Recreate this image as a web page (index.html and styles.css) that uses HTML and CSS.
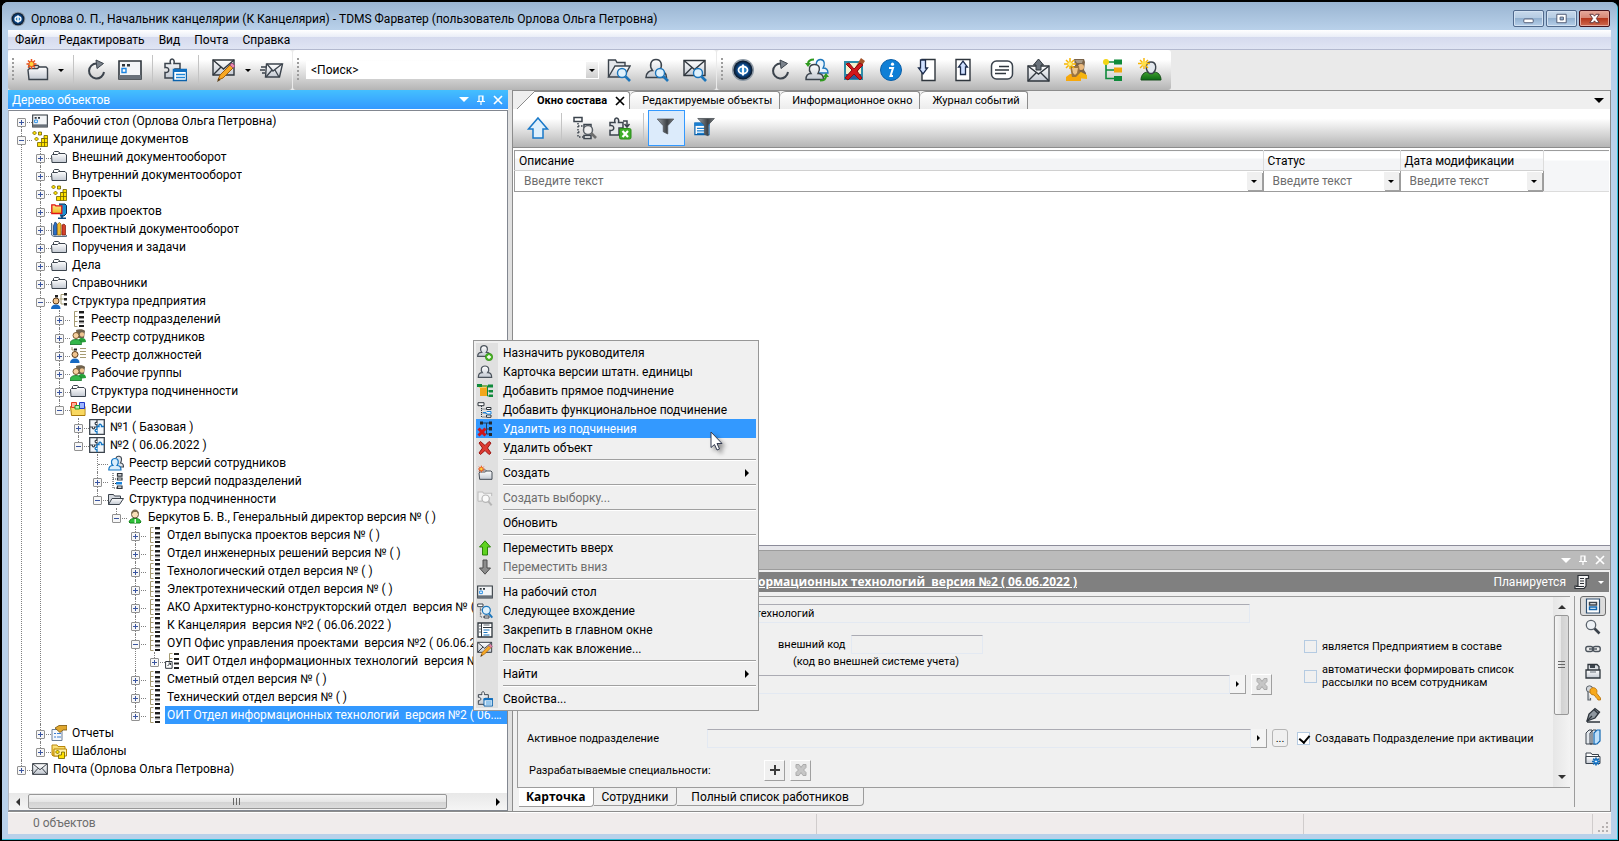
FILE: index.html
```html
<!DOCTYPE html>
<html lang="ru">

<head>
    <meta charset="UTF-8">
    <meta name="viewport" content="width=device-width, initial-scale=1.0">
    <title>TDMS Фарватер</title>
    <link rel="stylesheet" href="styles.css">
</head>

<body>
    <!-- icon set -->
    <svg class="sprite" aria-hidden="true">
        <defs>
            <linearGradient id="g-grey" x1="0" y1="0" x2="0" y2="1">
                <stop offset="0" stop-color="#fff" />
                <stop offset="1" stop-color="#c3c9d2" />
            </linearGradient>
            <linearGradient id="g-green" x1="0" y1="0" x2="0" y2="1">
                <stop offset="0" stop-color="#3fa02e" />
                <stop offset="1" stop-color="#0c6a14" />
            </linearGradient>
            <linearGradient id="g-yellow" x1="0" y1="0" x2="0" y2="1">
                <stop offset="0" stop-color="#ffe98a" />
                <stop offset="1" stop-color="#e9b51c" />
            </linearGradient>
            <radialGradient id="g-logo">
                <stop offset="0" stop-color="#4fb4f0" />
                <stop offset=".55" stop-color="#0d4f96" />
                <stop offset="1" stop-color="#0a1422" />
            </radialGradient>
            <linearGradient id="g-funnel" x1="0" y1="0" x2="1" y2="0">
                <stop offset="0" stop-color="#9aa0a6" />
                <stop offset=".6" stop-color="#3c4044" />
                <stop offset="1" stop-color="#7b8085" />
            </linearGradient>
        </defs>

        <symbol id="i-logo" viewBox="0 0 24 24">
            <circle cx="12" cy="12" r="11" fill="#8d99a5" />
            <circle cx="12" cy="12" r="9.5" fill="url(#g-logo)" />
            <ellipse cx="12" cy="12" rx="4.5" ry="3.5" fill="none" stroke="#fff" stroke-width="1.8" />
            <path d="M12 6.5v11" stroke="#fff" stroke-width="2" />
        </symbol>
        <symbol id="i-folder" viewBox="0 0 16 16">
            <path d="M2.500 6V3.500l1-1h4l1.500 2h4.500l1 1V6" fill="#fff" stroke="#3b434c" />
            <path d="M.5 6.500l1-1h5l1-1h6.500l1.500 1.500v7.500H1z" fill="url(#g-grey)" stroke="#3b434c" />
        </symbol>
        <symbol id="i-openfolder" viewBox="0 0 16 16">
            <path d="M.5 13.500v-10h5l1 1.500h6v3" fill="#d5d9df" stroke="#3b434c" />
            <path d="M.5 13.500l3.500-6h11.500l-4 6z" fill="url(#g-grey)" stroke="#3b434c" />
        </symbol>
        <symbol id="i-new" viewBox="0 0 24 24">
            <path d="M4 10V7.500h9l2 2.500h6" fill="#fff" stroke="#3b434c" stroke-width="1.400" />
            <path d="M3 12l1.500-1.500h8l1.500-1.500h7l1.500 1.500V21.500H4z" fill="url(#g-grey)" stroke="#3b434c" stroke-width="1.400" />
            <path d="M6.500 1v10M1.500 6h10M3 2.500l7 7M10 2.500l-7 7" stroke="#e8501c" stroke-width="1.500" />
            <circle cx="6.500" cy="6" r="2.600" fill="#ffd23a" stroke="#e8501c" />
        </symbol>
        <symbol id="i-refresh" viewBox="0 0 24 24">
            <path d="M12.500 5.500a7.500 7.500 0 1 0 7.500 8.500" fill="none" stroke="#3b434c" stroke-width="2" />
            <path d="M12 2l7.500 3.500-6.500 5z" fill="#7b838c" stroke="#3b434c" />
        </symbol>
        <symbol id="i-desktop" viewBox="0 0 24 20">
            <path d="M1 1h22v18H1z" fill="#f3f5f7" stroke="#2f363d" stroke-width="1.600" />
            <path d="M1 15h22v4H1z" fill="#69717a" />
            <path d="M4 4h3v2.500H4zM9 4h3v2.500H9z" fill="#2f363d" />
            <path d="M4 8.500h4v4H4z" fill="#fff" stroke="#1a84e0" stroke-width="1.400" />
        </symbol>
        <symbol id="i-props" viewBox="0 0 24 24">
            <path d="M2 18.500v-4c5 1 5-6 0-5V5.500h5.500c-2-6 5-6 3.500 0H17V11h-5v9H2z" fill="url(#g-grey)" stroke="#3b434c" stroke-width="1.500" />
            <path d="M10.500 11.500h13v11h-13z" fill="#fff" stroke="#0a62ac" stroke-width="1.500" />
            <path d="M10 11h14v3H10z" fill="#0f6fc0" />
            <path d="M13 16.500h9M13 19.500h9" stroke="#1d86d8" stroke-width="1.400" />
        </symbol>
        <symbol id="i-mail" viewBox="0 0 24 18">
            <path d="M1 1h22v16H1z" fill="url(#g-grey)" stroke="#2f363d" stroke-width="1.500" />
            <path d="M1 1l11 9L23 1M1 17l8-9M23 17l-8-9" fill="none" stroke="#2f363d" stroke-width="1.400" />
        </symbol>
        <symbol id="i-compose" viewBox="0 0 24 24">
            <path d="M1 2h21v15H1z" fill="url(#g-grey)" stroke="#2f363d" stroke-width="1.400" />
            <path d="M1 2l10.500 9L22 2M1 17l8-8" fill="none" stroke="#2f363d" stroke-width="1.400" />
            <path d="M6 22l2-5L18 7l3 3-10 10z" fill="#f7a823" stroke="#a35f0b" />
            <path d="M18 7l2-2 3 3-2 2z" fill="#e58bb0" stroke="#a8507a" />
            <path d="M5 24l1.500-4 2 2z" fill="#5b3c12" />
        </symbol>
        <symbol id="i-send" viewBox="0 0 24 24">
            <path d="M6.500 6h16l-3 13h-14z" fill="url(#g-grey)" stroke="#3b434c" stroke-width="1.400" />
            <path d="M7 6l6 7 9-7M6 19l6-7M19 19l-4-7" fill="none" stroke="#3b434c" stroke-width="1.300" />
            <path d="M1 9h5M0 12h5M2 15h3" stroke="#3b434c" stroke-width="1.300" />
        </symbol>
        <symbol id="i-findfolder" viewBox="0 0 24 24">
            <path d="M1.500 19V2h7l1.500 2.500h8V8" fill="#e4e7eb" stroke="#3b434c" stroke-width="1.400" />
            <path d="M1.500 19L8 8h15l-6 11z" fill="url(#g-grey)" stroke="#3b434c" stroke-width="1.400" />
            <circle cx="15" cy="15" r="4.500" fill="#dff1fc" stroke="#1b75bb" stroke-width="1.400" />
            <path d="M18.500 18.500L23 23" stroke="#1b75bb" stroke-width="2.600" />
        </symbol>
        <symbol id="i-finduser" viewBox="0 0 24 24">
            <path d="M1 19.500c0-5 4-7 6.500-7C4 8 5.500 1.500 11 1.500S18 8 14.500 12.500c3 0 7 2 7 7z" fill="url(#g-grey)" stroke="#3b434c" stroke-width="1.500" />
            <circle cx="15" cy="15" r="4.500" fill="#dff1fc" stroke="#1b75bb" stroke-width="1.400" />
            <path d="M18.500 18.500L23 23" stroke="#1b75bb" stroke-width="2.600" />
        </symbol>
        <symbol id="i-findmail" viewBox="0 0 24 24">
            <path d="M1 2.500h21v15H1z" fill="url(#g-grey)" stroke="#2f363d" stroke-width="1.400" />
            <path d="M1 2.500l10.500 9 10.500-9M1 17.500l8-8" fill="none" stroke="#2f363d" stroke-width="1.400" />
            <circle cx="15" cy="15" r="4.500" fill="#dff1fc" stroke="#1b75bb" stroke-width="1.400" />
            <path d="M18.500 18.500L23 23" stroke="#1b75bb" stroke-width="2.600" />
        </symbol>
        <symbol id="i-user" viewBox="0 0 24 24">
            <path d="M2 20c0-5 3-7 6-7C5 9 6 3 12 3s7 6 4 10c3 0 6 2 6 7z" fill="url(#g-grey)" stroke="#4b535c" stroke-width="1.800" />
        </symbol>
        <symbol id="i-useradd" viewBox="0 0 24 24">
            <path d="M1 17c0-4 3-6 6-6C4 7 5 1 10.500 1S17 7 14 11c3 0 6 2 6 6z" fill="url(#g-grey)" stroke="#4b535c" stroke-width="1.800" />
            <circle cx="18" cy="18" r="5.500" fill="#4cb528" stroke="#2d8a12" />
            <path d="M18 15v6M15 18h6" stroke="#fff" stroke-width="2" />
        </symbol>
        <symbol id="i-swapusers" viewBox="0 0 24 24">
            <path d="M9 15c0-4 2-5 4-5-3-3-2-8.500 2.500-8.500S20 7 18 10c2 0 5 1 5 5z" fill="#eaf5fd" stroke="#1b75bb" stroke-width="1.300" />
            <path d="M1 21.500c0-4 2-6 5-6-3-4-2-9 3.500-9s6 5 3.500 9c3 0 5.500 2 5.500 6z" fill="url(#g-grey)" stroke="#3b434c" stroke-width="1.400" />
            <path d="M9 1.500C5 1.500 3 3 3 6M15 22.500c4 0 6-2 6-4.500" fill="none" stroke="#2f9a1e" stroke-width="2" />
            <path d="M0 5h6L3 9zM18 19h6l-3-4z" fill="#2f9a1e" />
        </symbol>
        <symbol id="i-cross-note" viewBox="0 0 24 24">
            <path d="M2 3h19v19H2z" fill="#2c8ca8" />
            <path d="M4 5h15v13H4z" fill="#f4f1cf" />
            <path d="M4 16h15v5H4z" fill="#2a5a9a" />
            <path d="M19 0l4 3-9 13-4 2 1-5z" fill="#a5542a" />
            <path d="M4 6l3-1 5 6 6-6 3 2-6 6 5 7-2 2-6-6-6 6-3-2 7-8z" fill="#d1171b" stroke="#8a0d10" />
        </symbol>
        <symbol id="i-info" viewBox="0 0 24 24">
            <circle cx="12" cy="12" r="10.500" fill="#0f7fd6" stroke="#0b5fa8" />
            <path d="M10 10h4l-2.500 8h2.500" fill="none" stroke="#fff" stroke-width="2" />
            <circle cx="13.500" cy="6.200" r="1.600" fill="#fff" />
        </symbol>
        <symbol id="i-doc-down" viewBox="0 0 24 24">
            <path d="M6 1.500h13v21H6z" fill="#fff" stroke="#2f363d" stroke-width="1.400" />
            <path d="M4.500 2h5V10h2L7 16 2.500 10h2z" fill="#cfe0ff" stroke="#1c2c4c" stroke-width="1.300" />
        </symbol>
        <symbol id="i-doc-up" viewBox="0 0 24 24">
            <path d="M3 1.500h14v21H3z" fill="#fff" stroke="#2f363d" stroke-width="1.400" />
            <path d="M7.500 16.500V9h-2L10 3l4.500 6h-2v7.500z" fill="#cfe0ff" stroke="#1c2c4c" stroke-width="1.300" />
        </symbol>
        <symbol id="i-note" viewBox="0 0 24 24">
            <rect x="1.500" y="3" width="21" height="18" rx="5" fill="#fff" stroke="#3b434c" stroke-width="1.500" />
            <path d="M9 8.500h10M5 12h14M5 15.500h11" stroke="#2f363d" stroke-width="1.500" />
        </symbol>
        <symbol id="i-outbox" viewBox="0 0 24 24">
            <path d="M1 8h21v15H1z" fill="url(#g-grey)" stroke="#2f363d" stroke-width="1.400" />
            <path d="M1 8l10.500 8L22 8M1 23l8-8M22 23l-8-8" fill="none" stroke="#2f363d" stroke-width="1.400" />
            <path d="M9 12V7H6.500l5-6 5 6H14v5z" fill="#6a727b" stroke="#2f363d" />
        </symbol>
        <symbol id="i-newgroup" viewBox="0 0 24 24">
            <path d="M10 1h10l1 3-1 8 2 3v5h-9z" fill="#7a6348" />
            <path d="M11 2h8l-1 3h-5z" fill="#a79a86" />
            <circle cx="17" cy="9" r="3" fill="#e9b97e" />
            <path d="M13 20v-4l4-2 6 3v4z" fill="#f5b50f" />
            <path d="M2 23v-4l4-3h7l4 3v4z" fill="#f7a80c" />
            <path d="M6 8h9l1 7-4 4H8z" fill="#9a7440" />
            <path d="M8 10h6l-1 5-2 2-2-2z" fill="#ecc48a" />
            <path d="M6 0v11M0 6h12M2 2l8 8M10 2l-8 8" stroke="#f7b500" stroke-width="1.500" />
            <circle cx="6" cy="6" r="2" fill="#fff27a" />
        </symbol>
        <symbol id="i-hierarchy" viewBox="0 0 24 24">
            <path d="M5 6v14.500h8M5 12h8M5 4h8" fill="none" stroke="#0f8a3a" stroke-width="1.600" />
            <circle cx="5" cy="4" r="3" fill="#f2d512" />
            <path d="M13 1.500h8v5h-8zM13 18h8v5h-8z" fill="#0f8a3a" />
            <path d="M13 9.500h8v5h-8z" fill="#f0a90c" />
        </symbol>
        <symbol id="i-newuser" viewBox="0 0 24 24">
            <path d="M3 22c0-5 3-8 7-8h6c4 0 7 3 7 8z" fill="url(#g-green)" stroke="#174d1a" />
            <path d="M13 4c6 0 6 8 1.500 11.500h-3C7 12 7 4 13 4z" fill="#e3e8ee" stroke="#3b434c" stroke-width="1.400" />
            <path d="M6 0v11M0 5.500h12M2 2l8 8M10 2l-8 8" stroke="#f7b500" stroke-width="1.400" />
            <circle cx="6" cy="5.500" r="2.500" fill="#ffe04a" />
        </symbol>

        <symbol id="i-up" viewBox="0 0 24 24">
            <path d="M12 2L21.500 13H17v9H7v-9H2.500z" fill="#dff0fc" stroke="#1878c8" stroke-width="1.500" />
        </symbol>
        <symbol id="i-treefind" viewBox="0 0 24 24">
            <path d="M1 1.500h8v4H1z" fill="#fff" stroke="#3b434c" stroke-width="1.500" />
            <path d="M5 7v14h6M5 10h6M5 16h3" fill="none" stroke="#3b434c" stroke-width="1.400" stroke-dasharray="1.500 1.500" />
            <path d="M11 8.500h7v3h-7zM11 19.500h7v3h-7z" fill="#fff" stroke="#3b434c" stroke-width="1.500" />
            <circle cx="15" cy="14" r="4.500" fill="#eee" stroke="#5b6168" stroke-width="1.500" />
            <path d="M18 17l5 5" stroke="#6d6d6d" stroke-width="2.600" />
        </symbol>
        <symbol id="i-treefind-blue" viewBox="0 0 24 24">
            <path d="M1 1.500h8v4H1z" fill="#fff" stroke="#3b434c" stroke-width="1.500" />
            <path d="M5 7v14h6M5 10h6M5 16h3" fill="none" stroke="#3b434c" stroke-width="1.400" stroke-dasharray="1.500 1.500" />
            <path d="M11 19.500h7v3h-7z" fill="#fff" stroke="#3b434c" stroke-width="1.500" />
            <circle cx="14" cy="11" r="6" fill="#dff1fc" stroke="#1b75bb" stroke-width="1.800" />
            <path d="M18 16l5 6" stroke="#1b75bb" stroke-width="3" />
        </symbol>
        <symbol id="i-excel" viewBox="0 0 24 24">
            <path d="M2 18.500v-4c5 1 5-6 0-5V6.500h5c-2-6 5-6 3.500 0H15V12h-4v7H2z" fill="#e6e8eb" stroke="#3b434c" stroke-width="1.500" />
            <path d="M15 5h4v5M16.500 8l2.500 3 2.500-3" fill="none" stroke="#3b434c" stroke-width="1.500" />
            <rect x="11.500" y="12.500" width="11.500" height="10.500" rx="1.500" fill="#3fae2a" stroke="#2a8a18" />
            <path d="M14.500 15l5.500 6M20 15l-5.500 6" stroke="#fff" stroke-width="2.200" />
        </symbol>
        <symbol id="i-funnel" viewBox="-2 -1 32 32">
            <path d="M1 3h22l-8 9v11l-6-3V12z" fill="url(#g-funnel)" stroke="#4d5257" />
        </symbol>
        <symbol id="i-funnellist" viewBox="-2 -1 29 29">
            <path d="M1.500 7.500h17v14h-17z" fill="#fff" stroke="#0a62ac" stroke-width="1.500" />
            <path d="M1 7h18v4H1z" fill="#1b7fd0" />
            <path d="M4 14h12M4 17h12M4 20h9" stroke="#1b7fd0" stroke-width="1.400" />
            <path d="M5 2h20l-7.500 8v13L13 21V10z" fill="url(#g-funnel)" stroke="#4d5257" />
        </symbol>

        <symbol id="i-cubes" viewBox="0 0 16 16">
            <path d="M2.500 0l2 2-2 2-2-2zM4.500 6l2 2-2 2-2-2z" fill="#ffe100" stroke="#6e6000" stroke-width=".8" />
            <path d="M6.500 1h3v3h-3z" fill="#ffe100" stroke="#6e6000" stroke-width=".8" />
            <path d="M5.500 11.500h4v-4h2.500v-3h3.500v11h-10zM9.500 7.500h6M9.500 11.500h6M9.500 11.500v4M12.500 7.500v8" fill="#ffe100" stroke="#6e6000" stroke-width=".8" />
        </symbol>
        <symbol id="i-archive" viewBox="0 0 16 16">
            <path d="M8 1h6l1.500 1.500v8L13 13H9" fill="#1d8fd0" stroke="#0a2c50" />
            <path d="M7 15.500h8M11 12v3" stroke="#0a4a80" stroke-width="1.800" />
            <path d="M.8 10.500V1.800h3l1 1h6v7.700z" fill="url(#g-yellow)" stroke="#e01515" stroke-width="1.300" />
        </symbol>
        <symbol id="i-books" viewBox="0 0 16 16">
            <path d="M.5 2v12l2 1.500h13V14" fill="#cfd6dd" stroke="#5a7288" />
            <path d="M2.500 5l1.500-4 1.500 1v12h-3z" fill="#2b6fc4" stroke="#123a70" stroke-width=".7" />
            <path d="M6.500 3l2-1.500L10 3v11H6.500z" fill="#f3bd2d" stroke="#8a6208" stroke-width=".7" />
            <path d="M11 4l2-1 1.500 1.500V14H11z" fill="#d5402a" stroke="#7c1a0c" stroke-width=".7" />
        </symbol>
        <symbol id="i-struct" viewBox="0 0 16 16">
            <path d="M13 1.500h-3v9.500h3M8.500 6H13" fill="none" stroke="#a59b72" />
            <path d="M13 0h3v2.500h-3zM13 5h3v2.500h-3zM13 10h3v2.500h-3zM4 2h3v2.500H4z" fill="#222" />
            <circle cx="5" cy="8" r="3" fill="#f1c48f" stroke="#5a3a18" />
            <path d="M0 16c0-3 2-4.500 5-4.500s4.500 1.500 4.500 4.500z" fill="#1769c2" />
        </symbol>
        <symbol id="i-registry" viewBox="0 0 16 16">
            <path d="M7.500 .5h-3v15h3M4.500 5.500h3M4.500 10.500h3" fill="none" stroke="#a59b72" />
            <path d="M9 0h5v2H9zM9 5h5v2H9zM9 9.500h5v2H9zM9 14h5v2H9z" fill="#1c1c1c" />
            <path d="M9 2h5v1H9zM9 7h5v1H9zM9 11.500h5v1H9z" fill="#9b9b9b" />
        </symbol>
        <symbol id="i-people" viewBox="0 0 16 16">
            <path d="M6 1c3-1.500 8-1 9 1l-1 7H7z" fill="#70624d" />
            <circle cx="12" cy="5.500" r="2.200" fill="#efc491" />
            <path d="M8 14c0-3 1-5 4-5s4 2 4 4z" fill="#25a038" />
            <circle cx="6" cy="6.500" r="3" fill="#f6d0a0" stroke="#7b5a30" />
            <path d="M0 15.500c0-3.500 2-5 6-5s5.500 1.500 5.500 5z" fill="#34b84a" stroke="#137024" stroke-width=".8" />
        </symbol>
        <symbol id="i-positions" viewBox="0 0 16 16">
            <path d="M10 1.500h6M10 4.500h6M10 7.500h6M10 10.500h6M2 0v3h3" fill="none" stroke="#a59b72" />
            <path d="M4 1.500h3v2H4z" fill="#222" />
            <circle cx="5" cy="7.500" r="3" fill="#f1c48f" stroke="#5a3a18" />
            <path d="M0 16c0-3 2-4.500 5-4.500s4.500 1.500 4.500 4.500z" fill="#1769c2" />
        </symbol>
        <symbol id="i-versions" viewBox="0 0 16 16">
            <path d="M.5 5.500h14.500v9H1.500z" fill="url(#g-yellow)" stroke="#a8780a" />
            <path d="M1.500 1.500h5v5h-5z" fill="#ffb09a" stroke="#e03a1a" />
            <path d="M9.500 1.500h5v6h-5z" fill="#9cb4ff" stroke="#2038c8" />
            <path d="M5 4.500h4.500V8H5z" fill="#b8f0b0" stroke="#1c9a2c" />
            <path d="M2 9h12.500v5H2z" fill="#f9d860" />
        </symbol>
        <symbol id="i-puzzle" viewBox="0 0 16 16">
            <path d="M.7 .7h14.600v14.600H.7z" fill="#f2f6fa" stroke="#3b434c" stroke-width="1.300" />
            <path d="M1 8h2.500c-1 2.500 3 2.500 2 0H8V5.500c-2.500 1-2.500-3 0-2V1" fill="none" stroke="#3b434c" stroke-width="1.200" />
            <path d="M8 15v-2.500c-2.500 1-2.500-3 0-2V7.500h2c-1-3 3-3 2.500 0H15" fill="none" stroke="#1577c4" stroke-width="1.300" />
        </symbol>
        <symbol id="i-verusers" viewBox="0 0 16 16">
            <path d="M8 3c1-3 6-2 5.500 1.500C13.500 6 13 7 12.500 8c2 0 3 1.500 3 4h-4" fill="#dfe3e8" stroke="#3b434c" stroke-width="1.100" />
            <path d="M.8 15c0-3.500 2-4.500 4-4.500C2.500 8 3 3.500 7 3.500S11 8 9 10.500c2 0 4 1 4 4.500z" fill="#d9edfb" stroke="#1577c4" stroke-width="1.200" />
        </symbol>
        <symbol id="i-vertree" viewBox="0 0 16 16">
            <path d="M5 0v15h4M5 6h4M5 10.500h4" fill="none" stroke="#2f363d" stroke-dasharray="1 1" />
            <path d="M9.500 .7h4.500v2.500H9.500zM9.500 5h4.500v2H9.500zM9.500 13h4.500v2.300H9.500z" fill="#fff" stroke="#2f363d" stroke-width="1.200" />
            <path d="M8 9h6v2.500H8z" fill="#1b84dc" />
        </symbol>
        <symbol id="i-person" viewBox="0 0 16 16">
            <path d="M2 13c1-3 3-3.500 6-3.500s5 .5 6 3.500l-1 1H3z" fill="#2fc13a" stroke="#108018" />
            <circle cx="8" cy="5.500" r="3.500" fill="#f8dfb8" stroke="#6a5a44" />
            <path d="M4 5c0-6 8-6 8 0L10 3H7z" fill="#7b6a50" />
            <path d="M7.500 10h1.500v4H7.500z" fill="#e6f7e6" />
        </symbol>
        <symbol id="i-shortcut" viewBox="0 0 16 16">
            <path d="M7.500 .5h-3v9M4.500 5.500h3" fill="none" stroke="#a59b72" />
            <path d="M9 0h5v2H9zM9 5h5v2H9zM9 9.500h5v2H9zM9 14h5v2H9z" fill="#1c1c1c" />
            <path d="M.6 8.500h6.500v6.800H.6z" fill="#fff" stroke="#2f363d" />
            <path d="M2.500 13l3-3M3.500 10h2v2" fill="none" stroke="#2f363d" />
        </symbol>
        <symbol id="i-reports" viewBox="0 0 16 16">
            <path d="M1 4.500h10v11H1z" fill="#f5f8fc" stroke="#6d7f96" />
            <path d="M3 8.500h2M3 12h2M6 8.500h4M6 12h4" stroke="#3f7fd0" />
            <path d="M4 3l4-2.500h8V5h-4l-3 2.500z" fill="#e0a72e" stroke="#7a5408" stroke-width=".8" />
        </symbol>
        <symbol id="i-templates" viewBox="0 0 16 16">
            <path d="M1 12V2h5l1 1.500h7V13H2z" fill="url(#g-yellow)" stroke="#b8860b" />
            <path d="M3 6h12.500v7H3z" fill="#fff0a8" stroke="#b8860b" />
            <path d="M6.500 7l2 2-2 2-2-2zM7.500 12h3V9h3v6.500h-6z" fill="#ffe100" stroke="#6e6000" stroke-width=".8" />
        </symbol>

        <symbol id="i-addboss" viewBox="0 0 16 16">
            <path d="M3 4h7v9H3z" fill="#f2a71b" />
            <path d="M1 2h9l-1 3H2z" fill="#f7cf6a" />
            <path d="M0 1h5v3H0zM11 1.500h5v3h-5zM12 7h4v2.500h-4zM12 11.500h4V14h-4z" fill="#0f8a3a" />
            <path d="M10.500 3v10H12M5 3h6M10.500 8H12" fill="none" stroke="#0f8a3a" />
        </symbol>
        <symbol id="i-addfunc" viewBox="0 0 16 16">
            <path d="M1 .7h6v3H1z" fill="#fff" stroke="#2f363d" />
            <path d="M4.500 4v11H9M4.500 7H9M4.500 11H9" fill="none" stroke="#2f363d" stroke-dasharray="1 1" />
            <path d="M9.500 5.500h4.500v2H9.500zM9.500 13h4.500v2.300H9.500z" fill="#fff" stroke="#2f363d" />
            <path d="M6 10.500h3l1-1h4v2.500h-4l-1-1z" fill="#fff" stroke="#1b84dc" />
        </symbol>
        <symbol id="i-unlink" viewBox="0 0 16 16">
            <path d="M4 2h10M9.500 2v11H12M9.500 8H12" fill="none" stroke="#1d3d60" />
            <path d="M3 .5h3v3H3zM12 .5h3v3h-3zM12 6h3v3.500h-3zM12 12h3v3h-3z" fill="#26282b" />
            <path d="M1.500 7.500l7 7M8.500 7.500l-7 7" stroke="#cf1418" stroke-width="3" />
        </symbol>
        <symbol id="i-delete" viewBox="0 0 16 16">
            <path d="M2 3l1.500-1.500L8 5.500l4-4L14 3l-3.500 5 3.500 5-2 1.500-4-4-4.500 4L2 13l3.500-5z" fill="#dd3a32" stroke="#9e1410" />
        </symbol>
        <symbol id="i-select" viewBox="0 0 24 24">
            <path d="M1.500 17V3h7l1.500 2h12v4M1.500 17H8" fill="#f2f2f2" stroke="#bdbdbd" stroke-width="1.600" />
            <circle cx="13" cy="13" r="5.500" fill="#fafafa" stroke="#b5b5b5" stroke-width="1.800" />
            <path d="M17 17l5 6" stroke="#b5b5b5" stroke-width="3" />
        </symbol>
        <symbol id="i-moveup" viewBox="0 0 16 16">
            <path d="M8 .8L13.500 7H10.500v8h-5V7H2.500z" fill="#5fd320" stroke="#2b8208" />
        </symbol>
        <symbol id="i-movedown" viewBox="0 0 16 16">
            <path d="M8 15.200L13.500 9H10V1H6v8H2.500z" fill="#8d8d8d" stroke="#4d4d4d" />
        </symbol>
        <symbol id="i-pinwin" viewBox="0 0 16 16">
            <path d="M1 1h14v14H1z" fill="#fff" stroke="#2f363d" stroke-width="1.300" />
            <path d="M4.500 1v14M6 5.500h9" stroke="#2f363d" />
            <path d="M6.500 3h6M2 4h2M2 7h2M2 10h2" stroke="#59626c" />
            <path d="M6.500 8h6M6.500 10.500h4M6.500 13h6" stroke="#1b75bb" stroke-width="1.200" />
        </symbol>

        <symbol id="i-pin" viewBox="0 0 10 10">
            <path d="M3 6V1h4v5M1 6.500h8M5 7v3M6.500 1v5" fill="none" stroke="#fff" stroke-width="1.200" />
        </symbol>
        <symbol id="i-x" viewBox="0 0 10 10">
            <path d="M1 1l8 8M9 1L1 9" stroke="currentColor" stroke-width="1.700" />
        </symbol>
        <symbol id="i-xgrey" viewBox="0 0 14 14">
            <path d="M2 1.500h3l2 3 2-3h3v3l-2.500 2.500 2.500 2.500v3H9l-2-3-2 3H2v-3L4.500 7 2 4.500z" fill="#c6c6c6" stroke="#ababab" />
        </symbol>
        <symbol id="i-scroll" viewBox="0 0 16 16">
            <path d="M4 1.500h10.500v3H12V12L10 14.500H1V12h3z" fill="#f4f4f4" stroke="#2c3036" stroke-width="1.200" />
            <path d="M6 4.500h4M6 7h4M6 9.500h4M2 12.500h8" stroke="#2c3036" />
        </symbol>

        <symbol id="i-card" viewBox="0 0 16 16">
            <path d="M1.500 1h13v14h-13z" fill="#fff" stroke="#2f4f70" stroke-width="1.200" />
            <path d="M4.500 4.500h7v2.500h-7z" fill="#fff" stroke="#3b434c" stroke-width="1.500" />
            <path d="M4.500 9h7v2.500h-7z" fill="#fff" stroke="#0f66b0" stroke-width="1.500" />
        </symbol>
        <symbol id="i-zoom" viewBox="0 0 16 16">
            <circle cx="6" cy="6" r="4.700" fill="#eef2f6" stroke="#5c646d" stroke-width="1.300" />
            <path d="M9.500 9.500l5 5" stroke="#3b434c" stroke-width="2.600" />
        </symbol>
        <symbol id="i-link" viewBox="0 0 16 16">
            <rect x=".8" y="5.500" width="7" height="5" rx="2" fill="none" stroke="#4b535c" stroke-width="1.400" />
            <rect x="8.200" y="5.500" width="7" height="5" rx="2" fill="none" stroke="#4b535c" stroke-width="1.400" />
            <path d="M4 8h8" stroke="#4b535c" stroke-width="1.400" />
        </symbol>
        <symbol id="i-drawer" viewBox="0 0 16 16">
            <path d="M3 7V1.500h9L14 3.500V7" fill="#d9dde2" stroke="#2f363d" stroke-width="1.300" />
            <path d="M5 2h5v3H5z" fill="#3b434c" />
            <path d="M1 7h14v8H1z" fill="url(#g-grey)" stroke="#2f363d" stroke-width="1.300" />
            <path d="M5 9h6" stroke="#6d757e" />
        </symbol>
        <symbol id="i-keys" viewBox="0 0 16 16">
            <path d="M3 6v9h2.500v-2" fill="#d0d4d8" stroke="#5c646d" stroke-width="1.200" />
            <circle cx="4.500" cy="4" r="3.200" fill="#d0d4d8" stroke="#5c646d" />
            <path d="M5 5c1-3 5-3 6.500-.5.800 1.500.5 3 0 3.500l4 5v2h-2.500l-1-1.500-1-1-1-1.500-1-1C6 10 4.500 8 5 5z" fill="#f7a91c" stroke="#b56f08" stroke-width=".8" />
        </symbol>
        <symbol id="i-pen" viewBox="0 0 16 16">
            <path d="M2 14l2-7 6-5.500L14.500 5 10 11z" fill="#8f979f" stroke="#2f363d" stroke-width="1.300" />
            <path d="M9 2.500l4 4M2 14l5-5M2 15h13" stroke="#2f363d" stroke-width="1.300" />
        </symbol>
        <symbol id="i-volumes" viewBox="0 0 16 16">
            <path d="M1 15V4l3-3h3v14zM5 15V4l3-3h3v14z" fill="#e3e8ed" stroke="#3b434c" />
            <path d="M9 15V4l3-3h3v11l-3 3z" fill="#bfe0fa" stroke="#1269b4" stroke-width="1.200" />
        </symbol>
        <symbol id="i-foldergear" viewBox="0 0 16 16">
            <path d="M1 12.500V2h5l1 1.500h6.500V6" fill="#fff" stroke="#3b434c" />
            <path d="M1 5.500h14v7H1z" fill="url(#g-grey)" stroke="#3b434c" />
            <path d="M11 6.500v8M7 10.500h8M8.200 7.700l5.600 5.600M13.800 7.700l-5.600 5.600" stroke="#1269b4" stroke-width="1.700" />
            <circle cx="11" cy="10.500" r="1.400" fill="#fff" stroke="#1b84dc" />
        </symbol>
    </svg>

    <div class="window">
        <header class="titlebar">
            <svg class="icon16"><use href="#i-logo" /></svg>
            <h1>Орлова О. П., Начальник канцелярии (К Канцелярия) - TDMS Фарватер (пользователь Орлова Ольга Петровна)</h1>
            <div class="win-buttons">
                <button type="button" aria-label="Свернуть"><svg viewBox="0 0 30 16"><rect x="10" y="8.500" width="10" height="4" rx="1" fill="#fff" stroke="#4b5570" /></svg></button>
                <button type="button" aria-label="Развернуть"><svg viewBox="0 0 30 16"><path d="M10 3.500h10v9H10zM13.500 6.500v3h3.500v-3z" fill="#fff" fill-rule="evenodd" stroke="#4b5570" /></svg></button>
                <button type="button" class="win-close" aria-label="Закрыть"><svg viewBox="0 0 30 16"><path d="M10 3.500h3.500l1.500 2 1.500-2H20L17 8l3 4.500h-3.500L15 10.500l-1.500 2H10L13 8z" fill="#fff" stroke="#5a3038" /></svg></button>
            </div>
        </header>

        <nav class="menubar">
            <a href="#">Файл</a>
            <a href="#">Редактировать</a>
            <a href="#">Вид</a>
            <a href="#">Почта</a>
            <a href="#">Справка</a>
        </nav>

        <div class="toolbars">
            <div class="toolbar toolbar-main">
                <span class="grip"></span>
                <button type="button" aria-label="Создать"><svg><use href="#i-new" /></svg></button>
                <span class="caret"></span>
                <span class="sep"></span>
                <button type="button" aria-label="Обновить"><svg><use href="#i-refresh" /></svg></button>
                <button type="button" aria-label="Рабочий стол"><svg><use href="#i-desktop" /></svg></button>
                <span class="sep"></span>
                <button type="button" aria-label="Свойства"><svg><use href="#i-props" /></svg></button>
                <span class="sep sep-wide"></span>
                <button type="button" aria-label="Новое письмо"><svg><use href="#i-compose" /></svg></button>
                <span class="caret"></span>
                <button type="button" aria-label="Отправить"><svg><use href="#i-send" /></svg></button>
            </div>
            <div class="toolbar toolbar-search">
                <span class="grip"></span>
                <div class="combo">
                    <input type="text" value="&lt;Поиск&gt;" aria-label="Поиск">
                    <button type="button" aria-label="Список"><span class="caret"></span></button>
                </div>
                <button type="button" aria-label="Найти объект"><svg><use href="#i-findfolder" /></svg></button>
                <button type="button" aria-label="Найти пользователя"><svg><use href="#i-finduser" /></svg></button>
                <button type="button" aria-label="Найти письмо"><svg><use href="#i-findmail" /></svg></button>
            </div>
            <div class="toolbar toolbar-extra">
                <span class="grip"></span>
                <button type="button" aria-label="Фарватер"><svg><use href="#i-logo" /></svg></button>
                <button type="button" aria-label="Обновить"><svg><use href="#i-refresh" /></svg></button>
                <button type="button" aria-label="Сменить пользователя"><svg><use href="#i-swapusers" /></svg></button>
                <button type="button" aria-label="Отменить"><svg><use href="#i-cross-note" /></svg></button>
                <button type="button" aria-label="Информация"><svg><use href="#i-info" /></svg></button>
                <button type="button" aria-label="Входящий"><svg><use href="#i-doc-down" /></svg></button>
                <button type="button" aria-label="Исходящий"><svg><use href="#i-doc-up" /></svg></button>
                <button type="button" aria-label="Записка"><svg><use href="#i-note" /></svg></button>
                <button type="button" aria-label="Письмо"><svg><use href="#i-outbox" /></svg></button>
                <button type="button" aria-label="Новая группа"><svg><use href="#i-newgroup" /></svg></button>
                <button type="button" aria-label="Подчинение"><svg><use href="#i-hierarchy" /></svg></button>
                <button type="button" aria-label="Новый сотрудник"><svg><use href="#i-newuser" /></svg></button>
            </div>
        </div>

        <main class="workspace">
            <section class="tree-panel">
                <div class="panel-head">
                    <h2>Дерево объектов</h2>
                    <span class="caret caret-big"></span>
                    <svg class="icon10"><use href="#i-pin" /></svg>
                    <svg class="icon10"><use href="#i-x" /></svg>
                </div>
                <div class="tree-box">
                    <ul class="tree">
                        <li><div class="node"><i class="exp"></i><svg><use href="#i-desktop" /></svg><span>Рабочий стол (Орлова Ольга Петровна)</span></div></li>
                        <li><div class="node"><i class="exp open"></i><svg><use href="#i-cubes" /></svg><span>Хранилище документов</span></div>
                            <ul>
                                <li><div class="node"><i class="exp"></i><svg><use href="#i-folder" /></svg><span>Внешний документооборот</span></div></li>
                                <li><div class="node"><i class="exp"></i><svg><use href="#i-folder" /></svg><span>Внутренний документооборот</span></div></li>
                                <li><div class="node"><i class="exp"></i><svg><use href="#i-cubes" /></svg><span>Проекты</span></div></li>
                                <li><div class="node"><i class="exp"></i><svg><use href="#i-archive" /></svg><span>Архив проектов</span></div></li>
                                <li><div class="node"><i class="exp"></i><svg><use href="#i-books" /></svg><span>Проектный документооборот</span></div></li>
                                <li><div class="node"><i class="exp"></i><svg><use href="#i-folder" /></svg><span>Поручения и задачи</span></div></li>
                                <li><div class="node"><i class="exp"></i><svg><use href="#i-folder" /></svg><span>Дела</span></div></li>
                                <li><div class="node"><i class="exp"></i><svg><use href="#i-folder" /></svg><span>Справочники</span></div></li>
                                <li><div class="node"><i class="exp open"></i><svg><use href="#i-struct" /></svg><span>Структура предприятия</span></div>
                                    <ul>
                                        <li><div class="node"><i class="exp"></i><svg><use href="#i-registry" /></svg><span>Реестр подразделений</span></div></li>
                                        <li><div class="node"><i class="exp"></i><svg><use href="#i-people" /></svg><span>Реестр сотрудников</span></div></li>
                                        <li><div class="node"><i class="exp"></i><svg><use href="#i-positions" /></svg><span>Реестр должностей</span></div></li>
                                        <li><div class="node"><i class="exp"></i><svg><use href="#i-people" /></svg><span>Рабочие группы</span></div></li>
                                        <li><div class="node"><i class="exp"></i><svg><use href="#i-folder" /></svg><span>Структура подчиненности</span></div></li>
                                        <li><div class="node"><i class="exp open"></i><svg><use href="#i-versions" /></svg><span>Версии</span></div>
                                            <ul>
                                                <li><div class="node"><i class="exp"></i><svg><use href="#i-puzzle" /></svg><span>№1 ( Базовая )</span></div></li>
                                                <li><div class="node"><i class="exp open"></i><svg><use href="#i-puzzle" /></svg><span>№2 ( 06.06.2022 )</span></div>
                                                    <ul>
                                                        <li><div class="node"><i class="exp leaf"></i><svg><use href="#i-verusers" /></svg><span>Реестр версий сотрудников</span></div></li>
                                                        <li><div class="node"><i class="exp"></i><svg><use href="#i-vertree" /></svg><span>Реестр версий подразделений</span></div></li>
                                                        <li><div class="node"><i class="exp open"></i><svg><use href="#i-openfolder" /></svg><span>Структура подчиненности</span></div>
                                                            <ul>
                                                                <li><div class="node"><i class="exp open"></i><svg><use href="#i-person" /></svg><span>Беркутов Б. В., Генеральный директор версия № ( )</span></div>
                                                                    <ul>
                                                                        <li><div class="node"><i class="exp"></i><svg><use href="#i-registry" /></svg><span>Отдел выпуска проектов версия № ( )</span></div></li>
                                                                        <li><div class="node"><i class="exp"></i><svg><use href="#i-registry" /></svg><span>Отдел инженерных решений версия № ( )</span></div></li>
                                                                        <li><div class="node"><i class="exp"></i><svg><use href="#i-registry" /></svg><span>Технологический отдел версия № ( )</span></div></li>
                                                                        <li><div class="node"><i class="exp"></i><svg><use href="#i-registry" /></svg><span>Электротехнический отдел версия № ( )</span></div></li>
                                                                        <li><div class="node"><i class="exp"></i><svg><use href="#i-registry" /></svg><span>АКО Архитектурно-конструкторский отдел  версия № ( )</span></div></li>
                                                                        <li><div class="node"><i class="exp"></i><svg><use href="#i-registry" /></svg><span>К Канцелярия  версия №2 ( 06.06.2022 )</span></div></li>
                                                                        <li><div class="node"><i class="exp open"></i><svg><use href="#i-registry" /></svg><span>ОУП Офис управления проектами  версия №2 ( 06.06.2022 )</span></div>
                                                                            <ul>
                                                                                <li><div class="node"><i class="exp"></i><svg><use href="#i-shortcut" /></svg><span>ОИТ Отдел информационных технологий  версия №2 ( 06.06.2022 )</span></div></li>
                                                                            </ul>
                                                                        </li>
                                                                        <li><div class="node"><i class="exp"></i><svg><use href="#i-registry" /></svg><span>Сметный отдел версия № ( )</span></div></li>
                                                                        <li><div class="node"><i class="exp"></i><svg><use href="#i-registry" /></svg><span>Технический отдел версия № ( )</span></div></li>
                                                                        <li><div class="node selected"><i class="exp"></i><svg><use href="#i-registry" /></svg><span>ОИТ Отдел информационных технологий  версия №2 ( 06.06.2022 )</span></div></li>
                                                                    </ul>
                                                                </li>
                                                            </ul>
                                                        </li>
                                                    </ul>
                                                </li>
                                            </ul>
                                        </li>
                                    </ul>
                                </li>
                                <li><div class="node"><i class="exp"></i><svg><use href="#i-reports" /></svg><span>Отчеты</span></div></li>
                                <li><div class="node"><i class="exp"></i><svg><use href="#i-templates" /></svg><span>Шаблоны</span></div></li>
                            </ul>
                        </li>
                        <li><div class="node"><i class="exp"></i><svg><use href="#i-mail" /></svg><span>Почта (Орлова Ольга Петровна)</span></div></li>
                    </ul>
                    <div class="hscroll">
                        <span class="arrow arrow-left"></span>
                        <div class="track"><div class="thumb"></div></div>
                        <span class="arrow arrow-right"></span>
                    </div>
                </div>
            </section>

            <div class="content">
                <section class="list-panel">
                    <div class="tabs">
                        <a href="#" class="tab active">Окно состава <svg class="icon10"><use href="#i-x" /></svg></a>
                        <a href="#" class="tab">Редактируемые объекты</a>
                        <a href="#" class="tab">Информационное окно</a>
                        <a href="#" class="tab">Журнал событий</a>
                        <span class="caret caret-big"></span>
                    </div>
                    <div class="list-tools">
                        <button type="button" aria-label="Вверх"><svg><use href="#i-up" /></svg></button>
                        <span class="sep"></span>
                        <button type="button" aria-label="Найти в дереве"><svg><use href="#i-treefind" /></svg></button>
                        <button type="button" aria-label="Экспорт"><svg><use href="#i-excel" /></svg></button>
                        <span class="sep"></span>
                        <button type="button" class="pressed" aria-label="Фильтр"><svg><use href="#i-funnel" /></svg></button>
                        <button type="button" aria-label="Настройка фильтра"><svg><use href="#i-funnellist" /></svg></button>
                    </div>
                    <table class="list">
                        <colgroup>
                            <col>
                            <col class="col-status">
                            <col class="col-date">
                            <col class="col-rest">
                        </colgroup>
                        <thead>
                            <tr>
                                <th>Описание</th>
                                <th>Статус</th>
                                <th>Дата модификации</th>
                                <td class="rest" rowspan="2"></td>
                            </tr>
                            <tr>
                                <td><div class="filter"><input type="text" placeholder="Введите текст" aria-label="Описание"><button type="button" aria-label="Список"><span class="caret"></span></button></div></td>
                                <td><div class="filter"><input type="text" placeholder="Введите текст" aria-label="Статус"><button type="button" aria-label="Список"><span class="caret"></span></button></div></td>
                                <td><div class="filter"><input type="text" placeholder="Введите текст" aria-label="Дата модификации"><button type="button" aria-label="Список"><span class="caret"></span></button></div></td>
                            </tr>
                        </thead>
                    </table>
                </section>

                <section class="card-panel">
                    <div class="panel-head panel-head-grey">
                        <span class="caret caret-big"></span>
                        <svg class="icon10"><use href="#i-pin" /></svg>
                        <svg class="icon10"><use href="#i-x" /></svg>
                    </div>
                    <div class="card-title">
                        <a href="#">ОИТ Отдел информационных технологий  версия №2 ( 06.06.2022 )</a>
                        <span>Планируется</span>
                        <svg class="icon16"><use href="#i-scroll" /></svg>
                        <span class="caret"></span>
                    </div>
                    <div class="card-body">
                        <div class="card-main">
                            <div class="card-scroll">
                                <form class="card-form">
                                    <div class="form-top">
                                        <div class="form-left">
                                            <div class="row row-name">
                                                <input type="text" aria-label="Наименование" value="Отдел информационных технологий">
                                            </div>
                                            <div class="row row-code">
                                                <label for="code">внешний код</label>
                                                <input type="text" id="code">
                                            </div>
                                            <p class="hint">(код во внешней системе учета)</p>
                                            <div class="row">
                                                <div class="picker">
                                                    <input type="text" aria-label="Руководитель">
                                                    <button type="button" aria-label="Выбрать"><span class="arrow arrow-right"></span></button>
                                                </div>
                                                <button type="button" class="btn" aria-label="Очистить"><svg><use href="#i-xgrey" /></svg></button>
                                            </div>
                                        </div>
                                        <div class="form-right">
                                            <label><input type="checkbox" disabled> является Предприятием в составе</label>
                                            <label><input type="checkbox" disabled> <span>автоматически формировать список рассылки по всем сотрудникам</span></label>
                                        </div>
                                    </div>
                                    <div class="row row-active">
                                        <label for="dept">Активное подразделение</label>
                                        <div class="picker">
                                            <input type="text" id="dept">
                                            <button type="button" aria-label="Выбрать"><span class="arrow arrow-right"></span></button>
                                        </div>
                                        <button type="button" class="dots">...</button>
                                        <label class="check"><input type="checkbox" checked> Создавать Подразделение при активации</label>
                                    </div>
                                    <div class="row row-spec">
                                        <span>Разрабатываемые специальности:</span>
                                        <button type="button" class="btn" aria-label="Добавить"><svg viewBox="0 0 14 14"><path d="M7 2v10M2 7h10" stroke="#3c3c3c" stroke-width="2" /></svg></button>
                                        <button type="button" class="btn" aria-label="Удалить"><svg><use href="#i-xgrey" /></svg></button>
                                    </div>
                                </form>
                                <div class="vscroll">
                                    <span class="arrow arrow-up"></span>
                                    <div class="track"><div class="thumb"></div></div>
                                    <span class="arrow arrow-down"></span>
                                </div>
                            </div>
                            <div class="card-tabs">
                                <a href="#" class="active">Карточка</a>
                                <a href="#">Сотрудники</a>
                                <a href="#" class="wide">Полный список работников</a>
                            </div>
                        </div>
                        <div class="side-tools">
                            <button type="button" class="pressed" aria-label="Карточка"><svg><use href="#i-card" /></svg></button>
                            <button type="button" aria-label="Просмотр"><svg><use href="#i-zoom" /></svg></button>
                            <button type="button" aria-label="Связи"><svg><use href="#i-link" /></svg></button>
                            <button type="button" aria-label="Файлы"><svg><use href="#i-drawer" /></svg></button>
                            <button type="button" aria-label="Доступ"><svg><use href="#i-keys" /></svg></button>
                            <button type="button" aria-label="Подписи"><svg><use href="#i-pen" /></svg></button>
                            <button type="button" aria-label="Версии"><svg><use href="#i-volumes" /></svg></button>
                            <button type="button" aria-label="Настройки"><svg><use href="#i-foldergear" /></svg></button>
                        </div>
                    </div>
                </section>
            </div>
        </main>

        <footer class="statusbar">
            <span class="cell-count">0 объектов</span>
            <span class="cell-mid"></span>
            <span class="cell-end"></span>
            <svg class="resize" viewBox="0 0 12 12"><path d="M9 2h2M9 6h2M5 6h2M9 10h2M5 10h2M1 10h2" stroke="#b5b0b0" stroke-width="2" /></svg>
        </footer>

        <div class="context-menu" role="menu">
            <button type="button" role="menuitem"><svg><use href="#i-useradd" /></svg>Назначить руководителя</button>
            <button type="button" role="menuitem"><svg><use href="#i-user" /></svg>Карточка версии штатн. единицы</button>
            <button type="button" role="menuitem"><svg><use href="#i-addboss" /></svg>Добавить прямое подчинение</button>
            <button type="button" role="menuitem"><svg><use href="#i-addfunc" /></svg>Добавить функциональное подчинение</button>
            <button type="button" role="menuitem" class="hover"><svg><use href="#i-unlink" /></svg>Удалить из подчинения</button>
            <button type="button" role="menuitem"><svg><use href="#i-delete" /></svg>Удалить объект</button>
            <hr>
            <button type="button" role="menuitem"><svg><use href="#i-new" /></svg>Создать<span class="arrow arrow-right"></span></button>
            <hr>
            <button type="button" role="menuitem" disabled><svg><use href="#i-select" /></svg>Создать выборку...</button>
            <hr>
            <button type="button" role="menuitem"><svg></svg>Обновить</button>
            <hr>
            <button type="button" role="menuitem"><svg><use href="#i-moveup" /></svg>Переместить вверх</button>
            <button type="button" role="menuitem" disabled><svg><use href="#i-movedown" /></svg>Переместить вниз</button>
            <hr>
            <button type="button" role="menuitem"><svg><use href="#i-desktop" /></svg>На рабочий стол</button>
            <button type="button" role="menuitem"><svg><use href="#i-treefind-blue" /></svg>Следующее вхождение</button>
            <button type="button" role="menuitem"><svg><use href="#i-pinwin" /></svg>Закрепить в главном окне</button>
            <button type="button" role="menuitem"><svg><use href="#i-compose" /></svg>Послать как вложение...</button>
            <hr>
            <button type="button" role="menuitem"><svg></svg>Найти<span class="arrow arrow-right"></span></button>
            <hr>
            <button type="button" role="menuitem"><svg><use href="#i-props" /></svg>Свойства...</button>
            <svg class="cursor" viewBox="0 0 13 20"><path d="M1 1v15.500l3.500-3 2.500 5.500 2.500-1-2.500-5.500h5z" fill="#fff" stroke="#333b52" /></svg>
        </div>
    </div>
</body>

</html>
```
FILE: styles.css
```css
* {
    box-sizing: border-box;
}

body {
    margin: 0;
    background: #000;
    color: #000;
    font-family: Roboto, "Open Sans", sans-serif;
    font-size: 12px;
    line-height: 18px;
}

h1,
h2,
p {
    margin: 0;
    font-size: 12px;
    font-weight: normal;
}

a {
    color: inherit;
    text-decoration: none;
}

button,
input {
    margin: 0;
    padding: 0;
    border: 0;
    background: none;
    color: inherit;
    font: inherit;
    min-width: 0;
}

.sprite {
    position: absolute;
    width: 0;
    height: 0;
}

.icon16 {
    width: 16px;
    height: 16px;
    flex: none;
}

.icon10 {
    width: 10px;
    height: 10px;
    flex: none;
}

/* window frame */
.window {
    position: relative;
    display: flex;
    flex-direction: column;
    height: 100vh;
    padding: 0 7px 6px 6px;
    border: solid #000;
    border-width: 2px 1px 1px 2px;
    border-radius: 8px 8px 0 0;
    background: #b9d1ea;
    box-shadow: inset 0 -1px #2fc0dc, inset -1px 0 #2fc0dc;
}

.titlebar {
    display: flex;
    align-items: center;
    gap: 5px;
    height: 28px;
    flex: none;
    margin: 0 -6px;
    padding: 5px 7px 0 8px;
    border-radius: 6px 6px 0 0;
    background: linear-gradient(#99b4d1, #b9d1ea);
}

.titlebar h1 {
    flex: 1;
    white-space: nowrap;
}

.win-buttons {
    display: flex;
    gap: 2px;
    align-items: center;
}

.win-buttons button {
    width: 31px;
    height: 17px;
    border: 1px solid #50698c;
    border-radius: 2px;
    background: linear-gradient(#c8d9eb, #b3cae2 50%, #92b0cf 50%, #b7d0ea);
    box-shadow: inset 0 0 0 1px #d3e2f2;
}

.win-buttons svg {
    display: block;
    width: 29px;
    height: 15px;
}

.win-buttons .win-close {
    border-color: #45121c;
    background: linear-gradient(#e6a89a, #d68472 50%, #b5371d 50%, #cf6a50);
    box-shadow: inset 0 0 0 1px #e5a79a;
}

.menubar {
    display: flex;
    gap: 14px;
    height: 20px;
    flex: none;
    padding: 0 7px;
    border-bottom: 1px solid #b3b9cf;
    background: linear-gradient(#fff, #e9edf7 7px, #d5daee 7px, #e0e5f4);
    line-height: 20px;
}

/* toolbars */
.toolbars {
    display: flex;
    gap: 1px;
    height: 40px;
    flex: none;
    background: #eaeaea;
}

.toolbar {
    display: flex;
    align-items: center;
    border-radius: 3px;
    background: linear-gradient(#fff 25%, #b5b5b5);
}

.toolbar button,
.list-tools button {
    display: flex;
    align-items: center;
    justify-content: center;
}

.toolbar svg,
.list-tools svg {
    width: 24px;
    height: 24px;
}

.toolbar-main {
    width: 284px;
    gap: 10px;
    padding-left: 4px;
}

.toolbar-main .grip {
    margin-right: 1px;
}

.toolbar-main .caret {
    margin: 0 -1px;
}

.toolbar-main .sep-wide {
    margin: 0 3px 0 1px;
}

.toolbar-search {
    width: 423px;
    gap: 14px;
    padding-left: 4px;
}

.toolbar-search .grip {
    margin-right: -7px;
}

.toolbar-extra {
    width: 454px;
    gap: 13px;
    padding-left: 4px;
}

.toolbar-extra .grip {
    margin-right: -5px;
}

.grip {
    width: 2px;
    height: 24px;
    flex: none;
    background: repeating-linear-gradient(#9c9c9c 0 2px, transparent 2px 4px);
}

.sep {
    width: 1px;
    height: 30px;
    flex: none;
    background: #c4c4c4;
}

.caret {
    width: 0;
    height: 0;
    flex: none;
    border: solid transparent;
    border-width: 3px 3px 0;
    border-top-color: currentColor;
}

.caret-big {
    border-width: 5px 5px 0;
    border-top-color: currentColor;
}

.combo {
    display: flex;
    width: 293px;
    height: 18px;
    margin-right: -6px;
    background: #fff;
}

.combo input {
    flex: 1;
    padding: 0 5px;
}

.combo button,
.filter button {
    width: 12px;
    height: 16px;
    margin: 1px;
    background: linear-gradient(#f5f5f5, #cfcfcf);
    display: flex;
    align-items: center;
    justify-content: center;
}

/* panels */
.workspace {
    display: flex;
    flex: 1;
    min-height: 0;
    gap: 4px;
    background: #e0e0e0;
    border-bottom: 1px solid #8c8c8c;
}

.panel-head {
    display: flex;
    align-items: center;
    gap: 7px;
    height: 19px;
    flex: none;
    padding: 0 5px 0 4px;
    background: linear-gradient(#44bfff, #3399ff);
    color: #fff;
}

.panel-head h2 {
    flex: 1;
}

.tree-panel {
    display: flex;
    flex-direction: column;
    width: 500px;
    flex: none;
    background: #fff;
}

.tree-box {
    display: flex;
    flex-direction: column;
    flex: 1;
    min-height: 0;
    margin-top: 1px;
    border: 1px solid #828790;
    border-left-color: #b4b8c0;
}

/* tree */
.tree,
.tree ul {
    margin: 0;
    padding: 0;
    list-style: none;
}

.tree {
    flex: 1;
    min-height: 0;
    padding: 1px 0 0 8px;
    overflow: hidden;
}

.tree ul {
    margin-left: 19px;
}

.tree li {
    position: relative;
}

/* dotted guide between siblings */
.tree li::before {
    content: "";
    position: absolute;
    top: 0;
    bottom: 0;
    left: 4px;
    border-left: 1px dotted #808080;
}

.tree li:last-child::before {
    bottom: auto;
    height: 10px;
}

.tree > li:first-child::before {
    top: 9px;
}

.node {
    display: flex;
    align-items: center;
    height: 18px;
}

.node svg {
    width: 16px;
    height: 16px;
    flex: none;
    margin-right: 3px;
}

.node span {
    padding: 0 0 0 2px;
    overflow: hidden;
    white-space: pre;
    text-overflow: ellipsis;
}

.node.selected span {
    background: #3399ff;
    color: #fff;
}

.exp {
    position: relative;
    width: 9px;
    height: 9px;
    flex: none;
    margin-top: 2px;
    margin-right: 6px;
    border: 1px solid #919191;
    border-radius: 1px;
    background:
        linear-gradient(#3a55a0, #3a55a0) center / 5px 1px no-repeat,
        linear-gradient(#3a55a0, #3a55a0) center / 1px 5px no-repeat,
        #f7f7f7;
}

.exp.open {
    background:
        linear-gradient(#3a55a0, #3a55a0) center / 5px 1px no-repeat,
        #f7f7f7;
}

.exp::after {
    content: "";
    position: absolute;
    top: 3px;
    left: 9px;
    width: 5px;
    border-top: 1px dotted #808080;
}

.exp.leaf {
    border-color: transparent;
    background: none;
}

.exp.leaf::after {
    left: 4px;
    width: 10px;
}

/* scrollbars */
.arrow {
    width: 0;
    height: 0;
    flex: none;
    border: 4px solid transparent;
}

.arrow-left {
    border-left-width: 0;
    border-right-color: #333;
}

.arrow-right {
    border-right-width: 0;
    border-left-color: currentColor;
}

.arrow-up {
    border-top-width: 0;
    border-bottom-color: #333;
}

.arrow-down {
    border-bottom-width: 0;
    border-top-color: #333;
}

.track {
    flex: 1;
    min-width: 0;
    min-height: 0;
}

.hscroll {
    display: flex;
    align-items: center;
    gap: 8px;
    height: 17px;
    flex: none;
    padding: 0 7px;
    background: linear-gradient(#e8e8e8, #f5f5f5);
}

.hscroll .thumb {
    width: 91%;
    height: 15px;
    border: 1px solid #979797;
    border-radius: 2px;
    background:
        repeating-linear-gradient(90deg, #666 0 1px, transparent 1px 3px) center / 9px 7px no-repeat,
        linear-gradient(#f5f5f5, #e6e6e6 50%, #d2d2d2 50%, #dcdcdc);
}

.vscroll {
    display: flex;
    flex-direction: column;
    align-items: center;
    gap: 6px;
    width: 17px;
    flex: none;
    padding: 8px 0;
    background: linear-gradient(90deg, #e6e6e6, #f3f3f3);
}

.vscroll .thumb {
    width: 15px;
    height: 65%;
    border: 1px solid #979797;
    border-radius: 2px;
    background:
        repeating-linear-gradient(#666 0 1px, transparent 1px 3px) center / 7px 9px no-repeat,
        linear-gradient(90deg, #f5f5f5, #e6e6e6 50%, #d2d2d2 50%, #dcdcdc);
}

/* right side */
.content {
    display: flex;
    flex-direction: column;
    flex: 1;
    min-width: 0;
    gap: 4px;
    border: solid #8c8c8c;
    border-width: 1px 1px 0;
    background: #e6e6ea;
}

.list-panel {
    display: flex;
    flex-direction: column;
    flex: 1;
    min-height: 0;
    background: #fff;
    border-bottom: 1px solid #8c8c9a;
}

.tabs {
    display: flex;
    align-items: center;
    height: 18px;
    flex: none;
    padding: 0 6px 0 4px;
    background: #efefef;
    font-size: 11px;
}

.tabs > .caret {
    margin-left: auto;
}

.tab {
    position: relative;
    display: flex;
    align-items: center;
    height: 18px;
    padding: 0 7px 0 12px;
    border: solid #8c8c8c;
    border-width: 1px 1px 0 0;
    border-top-left-radius: 6px;
    border-top-right-radius: 3px;
    background: linear-gradient(#fff, #ececec);
    white-space: nowrap;
}

.tab.active {
    gap: 8px;
    padding: 0 4px 0 20px;
    border-radius: 0 3px 0 0;
    background: #fff;
    font-weight: bold;
}

/* slanted left edge */
.tab.active::before {
    content: "";
    position: absolute;
    top: -1px;
    left: 0;
    width: 18px;
    height: 18px;
    background: linear-gradient(to bottom right, #efefef 48%, #8c8c8c 48% 52%, #fff 52%);
}

.list-tools {
    display: flex;
    align-items: center;
    gap: 11px;
    height: 39px;
    flex: none;
    padding-left: 13px;
    border-bottom: 1px solid #8c8c8c;
    background: linear-gradient(#fff 25%, #b5b5b5);
}

.list-tools .pressed {
    width: 37px;
    height: 36px;
    margin: 0 -4px 0 -7px;
    border: 1px solid #3399ff;
    background: #dcebfb;
}

.list {
    width: calc(100% - 2px);
    margin: 2px 0 0 1px;
    border-collapse: collapse;
    table-layout: fixed;
    border: solid #9c9c9c;
    border-width: 1px 0 0 1px;
}

.list th,
.list td {
    padding: 0;
    border-right: 1px solid #9c9c9c;
}

.list th {
    height: 20px;
    padding-left: 4px;
    border-right-color: #dcdcdc;
    border-bottom: 1px solid #d0d0d0;
    background: linear-gradient(#fff 7px, #f3f4f6 7px);
    font-weight: normal;
    text-align: left;
}

.list td {
    height: 21px;
    border-bottom: 1px solid #9c9c9c;
}

.list .rest {
    border-right: 0;
    border-bottom-color: #dcdcdc;
    background: linear-gradient(#fff 9px, #f5f6f8 9px);
}

.col-status {
    width: 137px;
}

.col-date {
    width: 143px;
}

.col-rest {
    width: 66px;
}

.filter {
    display: flex;
    align-items: center;
}

.filter input {
    flex: 1;
    padding-left: 9px;
}

.filter input::placeholder {
    color: #6d6d6d;
}

.filter button {
    width: 15px;
    height: 18px;
    background: #f0f0f0;
    box-shadow: 1px 1px #a0a0a0;
}

.card-panel {
    display: flex;
    flex-direction: column;
    height: 261px;
    flex: none;
    border-top: 1px solid #9c9c9c;
    background: #f0f0f0;
}

.panel-head-grey {
    justify-content: flex-end;
    border-bottom: 1px solid #9c9c9c;
    background: #bbb;
}

.card-title {
    display: flex;
    align-items: center;
    gap: 8px;
    height: 20px;
    flex: none;
    margin: 2px 1px 4px;
    padding: 0 5px 0 146px;
    background: #808080;
    color: #fff;
}

.card-title a {
    flex: 1;
    font-family: "Open Sans", "Noto Sans", sans-serif;
    font-weight: bold;
    text-decoration: underline;
    white-space: pre;
}

.card-body {
    display: flex;
    flex: 1;
    min-height: 0;
}

.card-main {
    display: flex;
    flex-direction: column;
    flex: 1;
    min-width: 0;
    padding: 0 4px 4px;
}

.card-scroll {
    display: flex;
    height: 193px;
    border: solid #9c9c9c;
    border-width: 1px 0 1px 1px;
}

/* card form */
.card-form {
    flex: 1;
    min-width: 0;
    padding: 6px 0 0 9px;
    font-size: 11px;
    line-height: 13px;
}

.form-top {
    display: flex;
    gap: 32px;
}

.form-left {
    flex: 1;
    min-width: 0;
}

.form-right {
    display: flex;
    flex-direction: column;
    gap: 10px;
    width: 249px;
    flex: none;
    padding-top: 37px;
}

.form-right label,
.check {
    display: flex;
    align-items: center;
    gap: 5px;
}

.form-right label span {
    width: 200px;
}

.row {
    display: flex;
    align-items: center;
    gap: 5px;
    height: 20px;
}

.card-form input[type="text"] {
    height: 19px;
    border: 1px solid #e3e9f2;
    border-top-color: #ababb3;
    padding: 0 3px;
}

.card-form input[type="checkbox"] {
    width: 13px;
    height: 13px;
    flex: none;
    border: 1px solid #b5cbe2;
    appearance: none;
}

.card-form input[type="checkbox"]:checked {
    background: #fff;
}

.card-form input[type="checkbox"]:checked::before {
    content: "";
    display: block;
    width: 5px;
    height: 8px;
    margin: 0 0 0 3px;
    border: solid #000;
    border-width: 0 2px 2px 0;
    transform: rotate(40deg);
}

.row-name input {
    flex: 1;
    margin: 0 22px 0 95px;
}

.row-code {
    margin-top: 11px;
    padding-left: 251px;
}

.row-code input {
    width: 132px;
}

.hint {
    height: 20px;
    padding: 1px 0 0 266px;
    font-size: 11px;
    line-height: 13px;
}

.picker {
    display: flex;
    flex: 1;
    min-width: 0;
}

.picker input {
    flex: 1;
}

.picker button {
    display: flex;
    align-items: center;
    justify-content: center;
    width: 16px;
    height: 19px;
    border: solid #a0a0a0;
    border-width: 0 1px 1px 0;
    background: #f4f4f4;
}

.picker .arrow {
    border-width: 3px 0 3px 3px;
}

.btn {
    display: flex;
    align-items: center;
    justify-content: center;
    width: 21px;
    height: 21px;
    flex: none;
    border: 1px solid #fff;
    border-right-color: #a0a0a0;
    border-bottom-color: #a0a0a0;
}

.btn svg {
    width: 14px;
    height: 14px;
}

.row-active {
    margin-top: 34px;
}

.row-active > label:first-child {
    width: 175px;
}

.row-active .check {
    width: 256px;
    margin-left: 4px;
}

.dots {
    width: 16px;
    height: 18px;
    border: 1px solid #b5b5b5;
    border-radius: 3px;
}

.row-spec {
    margin-top: 12px;
    padding-left: 2px;
}

.row-spec span {
    width: 230px;
}

.card-tabs {
    display: flex;
    padding-left: 2px;
}

.card-tabs a {
    height: 18px;
    padding: 0 8px;
    border: solid #9c9c9c;
    border-width: 0 1px 1px 0;
    border-bottom-right-radius: 4px;
}

.card-tabs .active {
    padding: 0 7px;
    height: 19px;
    background: #fff;
    font-family: "Open Sans", "Noto Sans", sans-serif;
    font-weight: bold;
}

.card-tabs .wide {
    padding: 0 14px;
}

.side-tools {
    display: flex;
    flex-direction: column;
    align-items: center;
    width: 36px;
    flex: none;
    margin-bottom: 4px;
    border-left: 1px solid #9c9c9c;
}

.side-tools button {
    display: flex;
    align-items: center;
    justify-content: center;
    width: 26px;
    height: 22px;
}

.side-tools .pressed {
    height: 20px;
    border: 1px solid #6d6d6d;
    border-radius: 3px;
    background: #dcdcdc;
}

.side-tools svg {
    width: 16px;
    height: 16px;
}

/* status bar */
.statusbar {
    display: flex;
    align-items: center;
    height: 22px;
    flex: none;
    border-top: 1px solid #fff;
    background: #f0ecec;
    color: #6d6d6d;
}

.statusbar span {
    height: 20px;
    border-right: 1px solid #d0cccc;
}

.cell-count {
    flex: 1;
    padding-left: 25px;
}

.cell-mid {
    width: 487px;
}

.cell-end {
    width: 289px;
}

.resize {
    width: 12px;
    height: 12px;
    margin: 6px 2px 0 4px;
}

/* context menu */
.context-menu {
    position: absolute;
    top: 338px;
    left: 471px;
    width: 286px;
    padding: 2px;
    border: 1px solid #979797;
    background: linear-gradient(#e0e0e0, #e0e0e0) 2px 2px / 22px calc(100% - 4px) no-repeat, #f0f0f0;
}

.context-menu button {
    display: flex;
    align-items: center;
    width: 100%;
    height: 19px;
    text-align: left;
}

.context-menu button:disabled {
    color: #6d6d6d;
}

.context-menu button svg {
    width: 16px;
    height: 16px;
    margin: 0 10px 0 1px;
}

.context-menu button .arrow {
    margin: 0 7px 0 auto;
}

.context-menu .hover {
    background: #3399ff;
    color: #fff;
}

.context-menu hr {
    height: 2px;
    margin: 2px 0 2px 27px;
    border: solid #a0a0a0;
    border-width: 1px 0 0;
    background: #fff;
}

.cursor {
    position: absolute;
    top: 90px;
    left: 236px;
    width: 13px;
    height: 20px;
    filter: drop-shadow(3px 3px 2px rgba(0, 0, 0, 0.4));
}
```
